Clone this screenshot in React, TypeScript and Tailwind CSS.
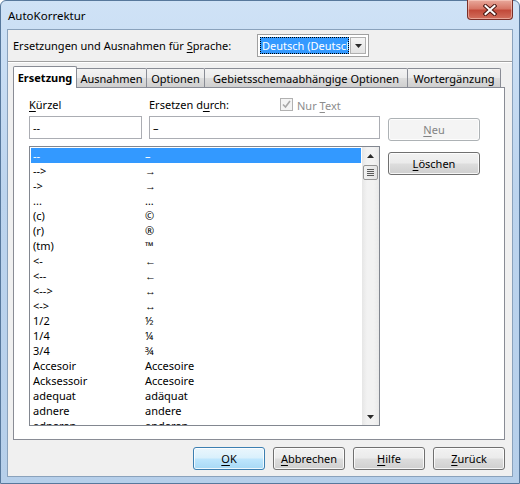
import React from 'react';

const ROWS: [string, string][] = [
  ['--', '–'],
  ['-->', '→'],
  ['->', '→'],
  ['...', '…'],
  ['(c)', '©'],
  ['(r)', '®'],
  ['(tm)', '™'],
  ['<-', '←'],
  ['<--', '←'],
  ['<-->', '↔'],
  ['<->', '↔'],
  ['1/2', '½'],
  ['1/4', '¼'],
  ['3/4', '¾'],
  ['Accesoir', 'Accesoire'],
  ['Acksessoir', 'Accesoire'],
  ['adequat', 'adäquat'],
  ['adnere', 'andere'],
  ['adneren', 'anderen'],
];

const BTN_NORMAL =
  'border-[#707070] bg-[linear-gradient(180deg,#f2f2f2_0%,#ebebeb_48%,#dddddd_52%,#cfcfcf_100%)] text-black';
const BTN_DEFAULT =
  'border-[#3c7fb1] bg-[linear-gradient(180deg,#eaf6fd_0%,#d9f0fc_48%,#bee6fd_52%,#a7d9f5_100%)] text-black';
const BTN_DISABLED = 'border-[#adb2b5] bg-[#f4f4f4] text-[#838383]';

const Button = ({ variant, className, children }: { variant: string; className?: string; children: React.ReactNode }) => (
  <div
    className={`flex h-[23px] items-center justify-center rounded-[3px] border shadow-[inset_0_0_0_1px_rgba(255,255,255,0.8)] ${variant} ${className ?? ''}`}
  >
    {children}
  </div>
);

const Tab = ({ className, children }: { className: string; children: React.ReactNode }) => (
  <div
    className={`flex h-[19px] items-center justify-center whitespace-nowrap rounded-tr-[2px] border-t border-r border-[#898c95] bg-[linear-gradient(180deg,#f3f3f3_0%,#ebebeb_50%,#dddddd_50%,#cfcfcf_100%)] ${className}`}
  >
    {children}
  </div>
);

const Triangle = ({ down }: { down?: boolean }) => (
  <svg width="7" height="4" viewBox="0 0 7 4">
    <path d={down ? 'M0 0 H7 L3.5 4 Z' : 'M0 4 H7 L3.5 0 Z'} fill="#2b2b2b" />
  </svg>
);

export default function App() {
  return (
    <div className="h-[484px] w-[520px] overflow-hidden bg-white font-['Segoe_UI','Noto_Sans',sans-serif] text-[11px] leading-none text-black">
      <div className="flex h-full w-full flex-col rounded-t-[6px] border border-[#57789c] bg-[linear-gradient(180deg,#cfe2f6_0%,#bcd4ee_40%,#b6cfea_100%)]">
        {/* title bar */}
        <div className="flex h-[28px] items-start justify-between pl-[7px] pr-[6px]">
          <span className="mt-[9px] text-[11.5px]">AutoKorrektur</span>
          <div className="-mt-px flex h-[20px] w-[46px] items-center justify-center rounded-b-[4px] border border-t-0 border-[#7a2f28] bg-[linear-gradient(180deg,#e9a99c_0%,#d77767_45%,#c24a3a_55%,#d2705e_100%)] shadow-[inset_0_0_0_1px_rgba(255,220,210,0.5)]">
            <svg width="14" height="12" viewBox="0 0 14 12">
              <path d="M2.5 2 L11.5 10 M11.5 2 L2.5 10" stroke="#4b1812" strokeWidth="4" strokeLinecap="square" />
              <path d="M2.5 2 L11.5 10 M11.5 2 L2.5 10" stroke="#ffffff" strokeWidth="2" strokeLinecap="square" />
            </svg>
          </div>
        </div>

        {/* client area */}
        <div className="mx-[6px] mb-[6px] flex flex-1 flex-col border border-[#8aa2bc] bg-[#f0f0f0]">
          <div className="mt-[4px] flex h-[23px] items-center pl-[5px]">
            <span className="w-[244px]">
              Ersetzungen und Ausnahmen für <u className="underline-offset-2">S</u>prache:
            </span>
            <div className="flex h-[23px] w-[112px] border border-[#a0a0a0] bg-white p-[2px]">
              <div className="flex flex-1 items-center overflow-hidden whitespace-nowrap border border-dotted border-black bg-[#3399ff] pl-px text-white">
                Deutsch (Deutschland)
              </div>
              <div className="ml-px flex w-[16px] items-center justify-center border border-[#b0b0b0] bg-[linear-gradient(180deg,#f5f5f5_0%,#e3e3e3_100%)]">
                <Triangle down />
              </div>
            </div>
          </div>

          <div className="mt-[4px] h-px bg-[#a0a0a0]" />
          <div className="h-px bg-white" />

          {/* tabs */}
          <div className="mt-[3px] flex h-[21px] items-end pl-[5px]">
            <div className="relative z-10 -mb-px flex h-[22px] w-[64px] items-center justify-center rounded-t-[2px] border border-b-0 border-[#898c95] bg-white font-bold">
              Ersetzung
            </div>
            <Tab className="w-[70px]">Ausnahmen</Tab>
            <Tab className="w-[58px]">Optionen</Tab>
            <Tab className="w-[203px]">Gebietsschemaabhängige Optionen</Tab>
            <Tab className="w-[93px]">Wortergänzung</Tab>
          </div>

          <div className="ml-[5px] mr-[7px] flex h-[353px] border border-[#898c95] bg-white pl-[15px] pt-[9px]">
            <div className="flex w-[351px] flex-col">
              <div className="flex h-[18px] items-start">
                <span className="w-[120px] pt-[2px]">
                  <u className="underline-offset-2">K</u>ürzel
                </span>
                <span className="w-[131px] pt-[2px]">
                  Ersetzen d<u className="underline-offset-2">u</u>rch:
                </span>
                <div className="flex items-center text-[#8d8d8d]">
                  <div className="mt-px flex h-[13px] w-[13px] items-center justify-center border border-[#b1b1b1] bg-[#f4f4f4]">
                    <svg width="9" height="9" viewBox="0 0 9 9">
                      <path d="M1 4.5 L3.5 7 L8 1" stroke="#a8a8a8" strokeWidth="1.6" fill="none" />
                    </svg>
                  </div>
                  <span className="ml-[4px] pt-[2px]">
                    Nur <u className="underline-offset-2">T</u>ext
                  </span>
                </div>
              </div>

              <div className="mt-px flex gap-[7px]">
                <div className="flex h-[23px] w-[113px] items-center border border-[#abadb3] bg-white pl-[3px]">--</div>
                <div className="flex h-[23px] w-[231px] items-center border border-[#abadb3] bg-white pl-[3px]">–</div>
              </div>

              <div className="mt-[7px] flex h-[280px] border border-[#828790] bg-white">
                <div className="flex-1 overflow-hidden pl-px pr-px pt-px">
                  {ROWS.map(([a, b], i) => (
                    <div
                      key={i}
                      className={`flex h-[15px] items-center whitespace-nowrap pl-[2px] leading-[15px] ${i === 0 ? 'bg-[#3399ff] text-white' : ''}`}
                    >
                      <span className="w-[112px]">{a}</span>
                      <span>{b}</span>
                    </div>
                  ))}
                </div>
                <div className="flex w-[17px] flex-col bg-[linear-gradient(90deg,#e6e6e6_0%,#f2f2f2_30%,#f2f2f2_70%,#e9e9e9_100%)]">
                  <div className="flex h-[17px] items-center justify-center">
                    <Triangle />
                  </div>
                  <div className="mx-px mt-px flex h-[15px] flex-col items-center justify-center gap-px rounded-[2px] border border-[#959595] bg-[linear-gradient(90deg,#f2f2f2_0%,#e3e3e3_100%)]">
                    <div className="h-px w-[7px] bg-[#5a5a5a]" />
                    <div className="h-px w-[7px] bg-[#5a5a5a]" />
                    <div className="h-px w-[7px] bg-[#5a5a5a]" />
                    <div className="h-px w-[7px] bg-[#5a5a5a]" />
                  </div>
                  <div className="flex-1" />
                  <div className="flex h-[17px] items-center justify-center">
                    <Triangle down />
                  </div>
                </div>
              </div>
            </div>

            <div className="ml-[8px] flex w-[92px] flex-col pt-[21px]">
              <Button variant={BTN_DISABLED}>
                <span>
                  <u className="underline-offset-2">N</u>eu
                </span>
              </Button>
              <Button variant={BTN_NORMAL} className="mt-[11px]">
                <span>
                  <u className="underline-offset-2">L</u>öschen
                </span>
              </Button>
            </div>
          </div>

          {/* bottom buttons */}
          <div className="mt-[7px] flex justify-end gap-[8px] pr-[7px]">
            <Button variant={BTN_DEFAULT} className="w-[72px]">
              <span>
                <u className="underline-offset-2">O</u>K
              </span>
            </Button>
            <Button variant={BTN_NORMAL} className="w-[72px]">
              <span>
                <u className="underline-offset-2">A</u>bbrechen
              </span>
            </Button>
            <Button variant={BTN_NORMAL} className="w-[72px]">
              <span>
                <u className="underline-offset-2">H</u>ilfe
              </span>
            </Button>
            <Button variant={BTN_NORMAL} className="w-[72px]">
              <span>
                <u className="underline-offset-2">Z</u>urück
              </span>
            </Button>
          </div>
        </div>
      </div>
    </div>
  );
}
